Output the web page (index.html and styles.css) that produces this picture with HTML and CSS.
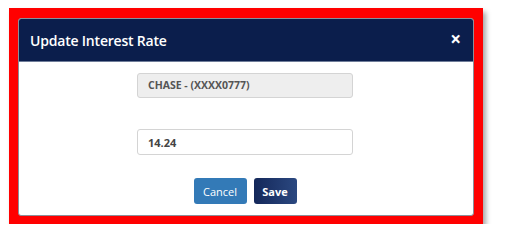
FILE: index.html
```html
<!DOCTYPE html>
<html lang="en">

<head>
    <meta charset="UTF-8">
    <meta name="viewport" content="width=device-width, initial-scale=1.0">
    <title>Update Interest Rate</title>
    <link rel="stylesheet" href="styles.css">
</head>

<body>

    <div class="frame">
        <div class="modal">
            <div class="modal-header">
                <span class="modal-title">Update Interest Rate</span>
                <span class="close">&times;</span>
            </div>
            <div class="modal-body">
                <div class="account">CHASE - (XXXX0777)</div>
                <input class="rate" type="text" value="14.24">
                <div class="buttons">
                    <button class="btn-cancel">Cancel</button>
                    <button class="btn-save">Save</button>
                </div>
            </div>
        </div>
    </div>

</body>

</html>
```

FILE: styles.css
```css
body {
    margin: 0;
    background-color: #ffffff;
    font-family: "Open Sans", Arial, sans-serif;
}

.frame {
    margin: 8px 0 0 9px;
    width: 474px;
    height: 216px;
    box-sizing: border-box;
    padding: 10px 9px 8px 9px;
    background-color: #ff0000;
    box-shadow: 3px 4px 5px rgba(0, 0, 0, 0.35);
}

.modal {
    height: 198px;
    background-color: #ffffff;
    border: 1px solid #8a8f99;
    border-radius: 3px;
    box-sizing: border-box;
    overflow: hidden;
}

.modal-header {
    height: 42px;
    background-color: #0b1e4c;
    border-bottom: 1px solid #6f7d99;
    display: flex;
    align-items: center;
    justify-content: space-between;
    padding: 0 12px 0 11px;
}

.modal-title {
    color: #ffffff;
    font-size: 14px;
    font-weight: 600;
    letter-spacing: -0.2px;
}

.close {
    color: #ffffff;
    font-weight: bold;
    font-size: 19px;
    line-height: 1;
    margin-top: -2px;
}

.modal-body {
    display: flex;
    flex-direction: column;
    align-items: center;
    padding-top: 11px;
    padding-right: 2px;
}

.account {
    width: 216px;
    height: 25px;
    box-sizing: border-box;
    background-color: #eeeeee;
    border: 1px solid #d4d4d4;
    border-radius: 3px;
    padding-left: 10px;
    font-size: 10.5px;
    font-weight: bold;
    color: #555555;
    line-height: 23px;
}

.rate {
    margin-top: 31px;
    width: 216px;
    height: 26px;
    box-sizing: border-box;
    border: 1px solid #d4d4d4;
    border-radius: 3px;
    padding: 0 0 0 10px;
    font-family: "Open Sans", Arial, sans-serif;
    font-size: 11px;
    font-weight: bold;
    color: #444444;
}

.buttons {
    margin-top: 23px;
    display: flex;
    gap: 7px;
}

.btn-cancel,
.btn-save {
    height: 26px;
    border: none;
    border-radius: 3px;
    color: #ffffff;
    font-family: "Open Sans", Arial, sans-serif;
    font-size: 11px;
    padding: 0;
}

.btn-cancel {
    width: 53px;
    background-color: #337ab7;
}

.btn-save {
    width: 43px;
    font-weight: bold;
    background: linear-gradient(to right, #14285a, #2b4880);
}
```
